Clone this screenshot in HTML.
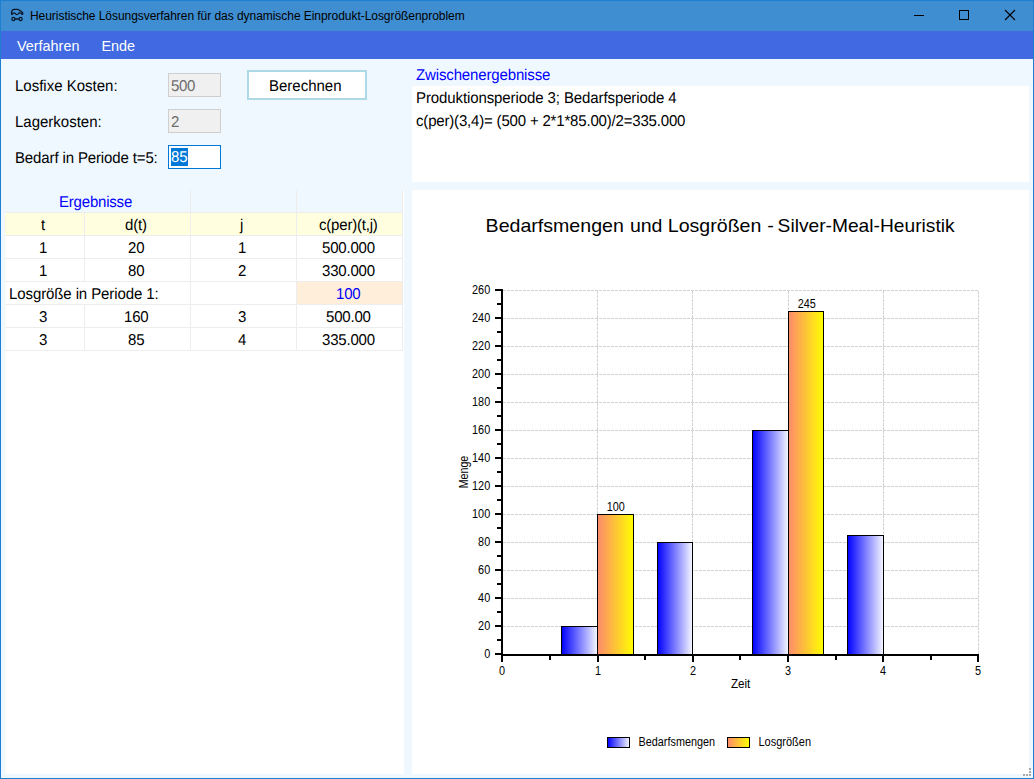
<!DOCTYPE html>
<html lang="de">
<head>
<meta charset="utf-8">
<title>Heuristische Lösungsverfahren für das dynamische Einprodukt-Losgrößenproblem</title>
<style>
*{box-sizing:border-box;margin:0;padding:0}
html,body{width:1034px;height:779px;overflow:hidden;background:#1e7fd1}
body{font-family:"Liberation Sans",sans-serif;font-size:15px;color:#000;position:relative}
.abs{position:absolute;white-space:nowrap}
.t{display:inline-block;line-height:1;transform:scaleY(1.045) rotate(0.03deg);transform-origin:50% 84.7%;white-space:nowrap}
#win{position:absolute;left:0;top:0;width:1034px;height:779px;background:#1e7fd1}
#titlebar{position:absolute;left:1px;top:0;width:1032px;height:31px;background:#3f8ed1;border-top:1px solid #1e7fd1}
#title{left:30px;top:8px;font-size:12px;line-height:16px;letter-spacing:-0.048px;color:#000}
#menubar{position:absolute;left:1px;top:31px;width:1032px;height:28px;background:#4169e1;color:#fff;font-size:14.4px}
#client{position:absolute;left:1px;top:59px;width:1032px;height:719px;background:#f0f8ff}
.lbl{font-size:15px;line-height:18px}
.tbd{position:absolute;height:24px;width:53px;border:1px solid #cfcfcf;background:#f0f0f0;color:#6d6d6d;font-size:15px;line-height:23.4px;padding-left:2px;letter-spacing:-0.3px}
#tb3{position:absolute;left:168px;top:145px;width:53px;height:24px;border:1px solid #0078d7;background:#fff}
#sel{position:absolute;left:2px;top:2px;width:17px;height:18px;background:#0078d7;color:#fff;font-size:15px;line-height:18px}
#btn{position:absolute;left:247px;top:70px;width:120px;height:30px;border:2px solid #add8e6;background:#fff;text-align:center;font-size:15px;line-height:27px;padding-right:3px}
#grid{position:absolute;left:5px;top:190px;width:399px;height:584px;background:#fff}
#grid .row{position:absolute;left:0;width:398px;height:23px}
#grid .c{position:absolute;top:0;height:23px;border-right:1px solid #ededed;border-bottom:1px solid #ededed;text-align:center;font-size:15px;line-height:23px;white-space:nowrap;padding-right:3px;letter-spacing:-0.2px}
.c0{left:0;width:80px}.c1{left:80px;width:106px}.c2{left:186px;width:106px}.c3{left:292px;width:106px}
#zw{position:absolute;left:412px;top:86px;width:617px;height:96px;background:#fff}
#chart{position:absolute;left:412px;top:190px;width:617px;height:584px;background:#fff}
</style>
</head>
<body>
<div id="win">
  <div id="titlebar"></div>
  <div id="title" class="abs">Heuristische Lösungsverfahren für das dynamische Einprodukt-Losgrößenproblem</div>
  <div id="menubar">
    <div class="abs" style="left:16px;top:5.7px;line-height:18px">Verfahren</div>
    <div class="abs" style="left:100.5px;top:5.7px;line-height:18px">Ende</div>
  </div>
  <div id="client"></div>

  <div class="abs lbl" style="left:15px;top:77px"><span class="t">Losfixe Kosten:</span></div>
  <div class="abs lbl" style="left:15px;top:113px"><span class="t">Lagerkosten:</span></div>
  <div class="abs lbl" style="left:15px;top:149px;letter-spacing:-0.13px"><span class="t">Bedarf in Periode t=5:</span></div>
  <div class="tbd" style="left:168px;top:73px"><span class="t">500</span></div>
  <div class="tbd" style="left:168px;top:109px"><span class="t">2</span></div>
  <div id="tb3"><div id="sel"><span class="t">85</span></div></div>
  <div id="btn"><span class="t">Berechnen</span></div>

  <div id="grid">
    <div class="row" style="top:0;background:#f0f8ff">
      <div class="c" style="left:0;width:186px;color:#0000ff"><span class="t">Ergebnisse</span></div><div class="c c2"></div><div class="c c3"></div>
    </div>
    <div class="row" style="top:23px;background:#ffffe0">
      <div class="c c0"><span class="t">t</span></div><div class="c c1"><span class="t">d(t)</span></div><div class="c c2"><span class="t">j</span></div><div class="c c3"><span class="t">c(per)(t,j)</span></div>
    </div>
    <div class="row" style="top:46px">
      <div class="c c0"><span class="t">1</span></div><div class="c c1"><span class="t">20</span></div><div class="c c2"><span class="t">1</span></div><div class="c c3"><span class="t">500.000</span></div>
    </div>
    <div class="row" style="top:69px">
      <div class="c c0"><span class="t">1</span></div><div class="c c1"><span class="t">80</span></div><div class="c c2"><span class="t">2</span></div><div class="c c3"><span class="t">330.000</span></div>
    </div>
    <div class="row" style="top:92px">
      <div class="c" style="left:0;width:186px;text-align:left;padding-left:4px;letter-spacing:-0.1px"><span class="t">Losgröße in Periode 1:</span></div><div class="c c2"></div><div class="c c3" style="background:#ffeed9;color:#0000ff"><span class="t">100</span></div>
    </div>
    <div class="row" style="top:115px">
      <div class="c c0"><span class="t">3</span></div><div class="c c1"><span class="t">160</span></div><div class="c c2"><span class="t">3</span></div><div class="c c3"><span class="t">500.00</span></div>
    </div>
    <div class="row" style="top:138px">
      <div class="c c0"><span class="t">3</span></div><div class="c c1"><span class="t">85</span></div><div class="c c2"><span class="t">4</span></div><div class="c c3"><span class="t">335.000</span></div>
    </div>
  </div>

  <div class="abs lbl" style="left:416px;top:66px;color:#0000ff;letter-spacing:-0.14px"><span class="t">Zwischenergebnisse</span></div>
  <div id="zw">
    <div class="abs lbl" style="left:4px;top:3px;letter-spacing:-0.1px"><span class="t">Produktionsperiode 3; Bedarfsperiode 4</span></div>
    <div class="abs lbl" style="left:4px;top:26px;letter-spacing:-0.18px"><span class="t">c(per)(3,4)= (500 + 2*1*85.00)/2=335.000</span></div>
  </div>

  <div id="chart"></div>
<svg id="ov" width="1034" height="779" viewBox="0 0 1034 779" style="position:absolute;left:0;top:0">
<defs>
<linearGradient id="gb" x1="0" y1="0" x2="1" y2="0"><stop offset="0" stop-color="#0000ff"/><stop offset="1" stop-color="#f6f8ff"/></linearGradient>
<linearGradient id="go" x1="0" y1="0" x2="1" y2="0"><stop offset="0" stop-color="#fc8a6c"/><stop offset="1" stop-color="#ffff00"/></linearGradient>
</defs>
<g shape-rendering="crispEdges" stroke="#d2d2d2" stroke-width="1" stroke-dasharray="3 1" fill="none">
<path d="M503 626.5H979"/>
<path d="M503 598.5H979"/>
<path d="M503 570.5H979"/>
<path d="M503 542.5H979"/>
<path d="M503 514.5H979"/>
<path d="M503 486.5H979"/>
<path d="M503 458.5H979"/>
<path d="M503 430.5H979"/>
<path d="M503 402.5H979"/>
<path d="M503 374.5H979"/>
<path d="M503 346.5H979"/>
<path d="M503 318.5H979"/>
<path d="M503 290.5H979"/>
<path d="M597.5 291V654"/>
<path d="M692.5 291V654"/>
<path d="M788.5 291V654"/>
<path d="M883.5 291V654"/>
<path d="M978.5 291V654"/>
</g>
<g shape-rendering="crispEdges" stroke="#000" stroke-width="1">
<rect x="561.5" y="626.5" width="36" height="28.0" fill="url(#gb)"/>
<rect x="597.5" y="514.5" width="36" height="140.0" fill="url(#go)"/>
<rect x="657.5" y="542.5" width="35" height="112.0" fill="url(#gb)"/>
<rect x="752.5" y="430.5" width="36" height="224.0" fill="url(#gb)"/>
<rect x="788.5" y="311.5" width="35" height="343.0" fill="url(#go)"/>
<rect x="847.5" y="535.5" width="36" height="119.0" fill="url(#gb)"/>
</g>
<g shape-rendering="crispEdges" fill="#000">
<rect x="501" y="289" width="2" height="367"/>
<rect x="501" y="654" width="478" height="2"/>
<rect x="495" y="653" width="6" height="2"/>
<rect x="497" y="639" width="4" height="2"/>
<rect x="495" y="625" width="6" height="2"/>
<rect x="497" y="611" width="4" height="2"/>
<rect x="495" y="597" width="6" height="2"/>
<rect x="497" y="583" width="4" height="2"/>
<rect x="495" y="569" width="6" height="2"/>
<rect x="497" y="555" width="4" height="2"/>
<rect x="495" y="541" width="6" height="2"/>
<rect x="497" y="527" width="4" height="2"/>
<rect x="495" y="513" width="6" height="2"/>
<rect x="497" y="499" width="4" height="2"/>
<rect x="495" y="485" width="6" height="2"/>
<rect x="497" y="471" width="4" height="2"/>
<rect x="495" y="457" width="6" height="2"/>
<rect x="497" y="443" width="4" height="2"/>
<rect x="495" y="429" width="6" height="2"/>
<rect x="497" y="415" width="4" height="2"/>
<rect x="495" y="401" width="6" height="2"/>
<rect x="497" y="387" width="4" height="2"/>
<rect x="495" y="373" width="6" height="2"/>
<rect x="497" y="359" width="4" height="2"/>
<rect x="495" y="345" width="6" height="2"/>
<rect x="497" y="331" width="4" height="2"/>
<rect x="495" y="317" width="6" height="2"/>
<rect x="497" y="303" width="4" height="2"/>
<rect x="495" y="289" width="6" height="2"/>
<rect x="501" y="656" width="2" height="6"/>
<rect x="549" y="656" width="2" height="4"/>
<rect x="597" y="656" width="2" height="6"/>
<rect x="644" y="656" width="2" height="4"/>
<rect x="692" y="656" width="2" height="6"/>
<rect x="739" y="656" width="2" height="4"/>
<rect x="787" y="656" width="2" height="6"/>
<rect x="835" y="656" width="2" height="4"/>
<rect x="882" y="656" width="2" height="6"/>
<rect x="930" y="656" width="2" height="4"/>
<rect x="977" y="656" width="2" height="6"/>
</g>
<g font-family="Liberation Sans, sans-serif" font-size="12.3" fill="#000">
<text x="484.15" y="658.0" textLength="6.05" lengthAdjust="spacingAndGlyphs">0</text>
<text x="478.1" y="630.0" textLength="12.1" lengthAdjust="spacingAndGlyphs">20</text>
<text x="478.1" y="602.0" textLength="12.1" lengthAdjust="spacingAndGlyphs">40</text>
<text x="478.1" y="574.0" textLength="12.1" lengthAdjust="spacingAndGlyphs">60</text>
<text x="478.1" y="546.0" textLength="12.1" lengthAdjust="spacingAndGlyphs">80</text>
<text x="472.05" y="518.0" textLength="18.15" lengthAdjust="spacingAndGlyphs">100</text>
<text x="472.05" y="490.0" textLength="18.15" lengthAdjust="spacingAndGlyphs">120</text>
<text x="472.05" y="462.0" textLength="18.15" lengthAdjust="spacingAndGlyphs">140</text>
<text x="472.05" y="434.0" textLength="18.15" lengthAdjust="spacingAndGlyphs">160</text>
<text x="472.05" y="406.0" textLength="18.15" lengthAdjust="spacingAndGlyphs">180</text>
<text x="472.05" y="378.0" textLength="18.15" lengthAdjust="spacingAndGlyphs">200</text>
<text x="472.05" y="350.0" textLength="18.15" lengthAdjust="spacingAndGlyphs">220</text>
<text x="472.05" y="322.0" textLength="18.15" lengthAdjust="spacingAndGlyphs">240</text>
<text x="472.05" y="294.0" textLength="18.15" lengthAdjust="spacingAndGlyphs">260</text>
<text x="498.98" y="675" textLength="6.05" lengthAdjust="spacingAndGlyphs">0</text>
<text x="594.98" y="675" textLength="6.05" lengthAdjust="spacingAndGlyphs">1</text>
<text x="689.98" y="675" textLength="6.05" lengthAdjust="spacingAndGlyphs">2</text>
<text x="784.98" y="675" textLength="6.05" lengthAdjust="spacingAndGlyphs">3</text>
<text x="879.98" y="675" textLength="6.05" lengthAdjust="spacingAndGlyphs">4</text>
<text x="974.98" y="675" textLength="6.05" lengthAdjust="spacingAndGlyphs">5</text>
<text x="797.75" y="308" textLength="18.1" lengthAdjust="spacingAndGlyphs">245</text>
<text x="606.75" y="511.0" textLength="18.1" lengthAdjust="spacingAndGlyphs">100</text>
<text x="730.9" y="688" textLength="19.4" lengthAdjust="spacingAndGlyphs">Zeit</text>
<text transform="translate(468 488.2) rotate(-90)" textLength="32.4" lengthAdjust="spacingAndGlyphs">Menge</text>
<text x="638.6" y="746" textLength="76.4" lengthAdjust="spacingAndGlyphs">Bedarfsmengen</text>
<text x="758.5" y="746" textLength="52.5" lengthAdjust="spacingAndGlyphs">Losgrößen</text>
</g>
<g font-family="Liberation Sans, sans-serif" font-size="18.4">
<text x="485.6" y="232.3" textLength="138.2" lengthAdjust="spacingAndGlyphs">Bedarfsmengen</text>
<text x="629.9" y="232.3" textLength="32.6" lengthAdjust="spacingAndGlyphs">und</text>
<text x="667.8" y="232.3" textLength="93.6" lengthAdjust="spacingAndGlyphs">Losgrößen</text>
<text x="767.3" y="232.3" textLength="6.6" lengthAdjust="spacingAndGlyphs">-</text>
<text x="777.6" y="232.3" textLength="177.0" lengthAdjust="spacingAndGlyphs">Silver-Meal-Heuristik</text>
</g>
<g shape-rendering="crispEdges" stroke="#000" stroke-width="1">
<rect x="607.5" y="737.5" width="22" height="10" fill="url(#gb)"/>
<rect x="727.5" y="737.5" width="22" height="10" fill="url(#go)"/>
</g>
<g shape-rendering="crispEdges" fill="#a8a8a8">
<rect x="1029" y="768" width="2" height="2"/>
<rect x="1029" y="771" width="2" height="2"/>
<rect x="1029" y="774" width="2" height="2"/>
<rect x="1026" y="774" width="2" height="2"/>
<rect x="1023" y="774" width="2" height="2"/>
</g>
<g shape-rendering="crispEdges" fill="none" stroke="#000" stroke-width="1">
<path d="M914 15.5H924"/>
<rect x="959.5" y="10.5" width="9" height="9"/>
</g>
<path d="M1005 10L1015 20M1015 10L1005 20" stroke="#000" stroke-width="1.15" fill="none"/>
<g fill="none" stroke="#0a1628" stroke-linecap="round" stroke-linejoin="round">
<path d="M11.8 14.4C11.4 12.8 11.6 11 12.5 10C13 9.5 13.6 9.35 14.3 9.35L17.3 9.35C18.3 9.35 19 9.8 19.9 10.5C21 11.3 22.5 11.9 22.8 13.2L22.6 14.4" stroke-width="1.3"/>
<path d="M12.3 14.4C12.6 13.4 13.1 12.9 14 12.9C14.9 12.9 15.2 13.6 15.7 14.1C16.2 14.6 17.3 14.6 17.8 14.1C18.4 13.5 18.8 12.9 19.8 12.9C20.8 12.9 21.6 13.5 22 14.4" stroke-width="1.2"/>
<path d="M19.9 11.7C20.8 11.8 21.6 12.3 22 13" stroke-width="0.8" opacity="0.6"/>
<ellipse cx="13.4" cy="19" rx="1.55" ry="1.7" stroke-width="1.2"/><ellipse cx="20.6" cy="19" rx="1.55" ry="1.7" stroke-width="1.2"/><path d="M15.1 19H18.9" stroke-width="1.5"/>
</g>
</svg>
</div>
</body>
</html>
